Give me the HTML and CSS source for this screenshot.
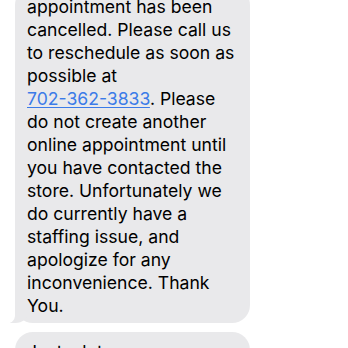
FILE: index.html
```html
<!DOCTYPE html>
<html>
<head>
<meta charset="utf-8">
<link rel="stylesheet" href="styles.css">
</head>
<body>
<div class="thread">
  <div class="bubble first">
    <p class="msg">appointment has been<br>cancelled. Please call us<br>to reschedule as soon as<br>possible at<br><a class="link" href="#">702-362-3833</a>. Please<br>do not create another<br>online appointment until<br>you have contacted the<br>store. Unfortunately we<br>do currently have a<br>staffing issue, and<br>apologize for any<br>inconvenience. Thank<br>You.</p>
  </div>
  <div class="bubble second">
    <p class="msg">Just a lot</p>
  </div>
</div>
</body>
</html>
```
FILE: styles.css
```css
html, body {
  margin: 0;
  padding: 0;
  background: #ffffff;
  overflow: hidden;
}
.thread {
  display: flex;
  flex-direction: column;
  gap: 9px;
  padding-left: 15px;
  margin-top: -13px;
}
.bubble {
  position: relative;
  width: 235px;
  box-sizing: border-box;
  background: #e9e9eb;
  border-radius: 18px;
  padding: 8px 12px 6px 12px;
}
.bubble.first::before {
  content: "";
  position: absolute;
  left: -6px;
  bottom: 0;
  width: 20px;
  height: 18px;
  background: #e9e9eb;
  border-bottom-right-radius: 14px 12px;
}
.bubble.first::after {
  content: "";
  position: absolute;
  left: -12px;
  bottom: -1px;
  width: 12px;
  height: 20px;
  background: #ffffff;
  border-bottom-right-radius: 10px 8px;
}
.msg {
  margin: 0;
  font-family: "Inter", "Liberation Sans", sans-serif;
  font-size: 17.6px;
  line-height: 23px;
  color: #000000;
  letter-spacing: 0;
  white-space: nowrap;
}
.link {
  color: #3b7be8;
  text-decoration: underline;
  text-decoration-thickness: 1px;
  text-underline-offset: 2px;
}
```
